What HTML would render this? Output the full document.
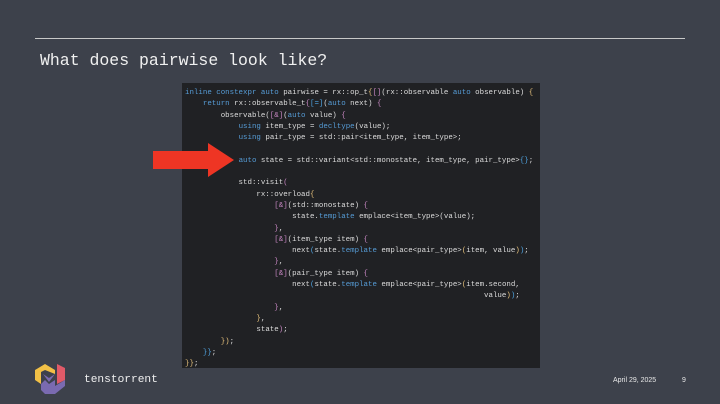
<!DOCTYPE html>
<html><head><meta charset="utf-8"><style>
body{margin:0;width:720px;height:404px;background:#3d414b;position:relative;overflow:hidden;font-family:"Liberation Sans",sans-serif}
.line{position:absolute;left:35px;top:38px;width:650px;height:1px;background:#c8c8c8}
.title{position:absolute;left:40px;top:51px;font:16.5px "Liberation Mono",monospace;color:#f0f0f0}
.code{position:absolute;left:182px;top:83px;width:358px;height:285px;background:#202124}
pre{margin:0;position:absolute;left:185px;top:88px;font:7.45px/11.3px "Liberation Mono",monospace;color:#dcdcdc}
.k{color:#569cd6}.y{color:#e5c07b}.p{color:#c586c0}.b{color:#4fa3e0}
.foot{position:absolute;top:377px;font-size:7px;color:#e8e8e8}
.brand{position:absolute;left:84px;top:374px;font:11.2px "Liberation Mono",monospace;color:#f0f0f0}
</style></head><body>
<div class="line"></div>
<div class="title">What does pairwise look like?</div>
<div class="code"></div>
<pre><span class="k">inline constexpr auto</span> pairwise = rx::op_t<span class="y">{</span><span class="p">[]</span>(rx::observable <span class="k">auto</span> observable) <span class="y">{</span>
    <span class="k">return</span> rx::observable_t<span class="p">{</span><span class="b">[=]</span>(<span class="k">auto</span> next) <span class="p">{</span>
        observable(<span class="p">[&amp;]</span>(<span class="k">auto</span> value) <span class="p">{</span>
            <span class="k">using</span> item_type = <span class="k">decltype</span>(value);
            <span class="k">using</span> pair_type = std::pair&lt;item_type, item_type&gt;;

            <span class="k">auto</span> state = std::variant&lt;std::monostate, item_type, pair_type&gt;<span class="b">{}</span>;

            std::visit<span class="p">(</span>
                rx::overload<span class="y">{</span>
                    <span class="p">[&amp;]</span>(std::monostate) <span class="p">{</span>
                        state.<span class="k">template</span> emplace&lt;item_type&gt;(value);
                    <span class="p">}</span>,
                    <span class="p">[&amp;]</span>(item_type item) <span class="p">{</span>
                        next<span class="b">(</span>state.<span class="k">template</span> emplace&lt;pair_type&gt;<span class="y">(</span>item, value<span class="y">)</span><span class="b">)</span>;
                    <span class="p">}</span>,
                    <span class="p">[&amp;]</span>(pair_type item) <span class="p">{</span>
                        next<span class="b">(</span>state.<span class="k">template</span> emplace&lt;pair_type&gt;<span class="y">(</span>item.second,
                                                                   value<span class="y">)</span><span class="b">)</span>;
                    <span class="p">}</span>,
                <span class="y">}</span>,
                state<span class="p">)</span>;
        <span class="y">})</span>;
    <span class="b">}}</span>;
<span class="y">}}</span>;</pre>
<svg style="position:absolute;left:150px;top:141px" width="86" height="38"><polygon points="3,10 58,10 58,2 84,19 58,36 58,28 3,28" fill="#ee3524"/></svg>
<svg style="position:absolute;left:33px;top:362px" width="36" height="34">
<polygon points="2,8 12,2 22,8 22,12 12,8 8,10 8,22 2,18" fill="#f2c046"/>
<polygon points="24,2 32,6 32,18 24,22" fill="#e05a68"/>
<polygon points="8,22 12,18 16,22 22,18 22,24 32,18 32,24 22,32 12,32 8,28" fill="#7a6ab0"/>
<polygon points="10,12 16,16 22,12 16,20" fill="#7a6ab0"/>
</svg>
<div class="brand">tenstorrent</div>
<div class="foot" style="left:613px">April 29, 2025</div>
<div class="foot" style="left:682px">9</div>
</body></html>
